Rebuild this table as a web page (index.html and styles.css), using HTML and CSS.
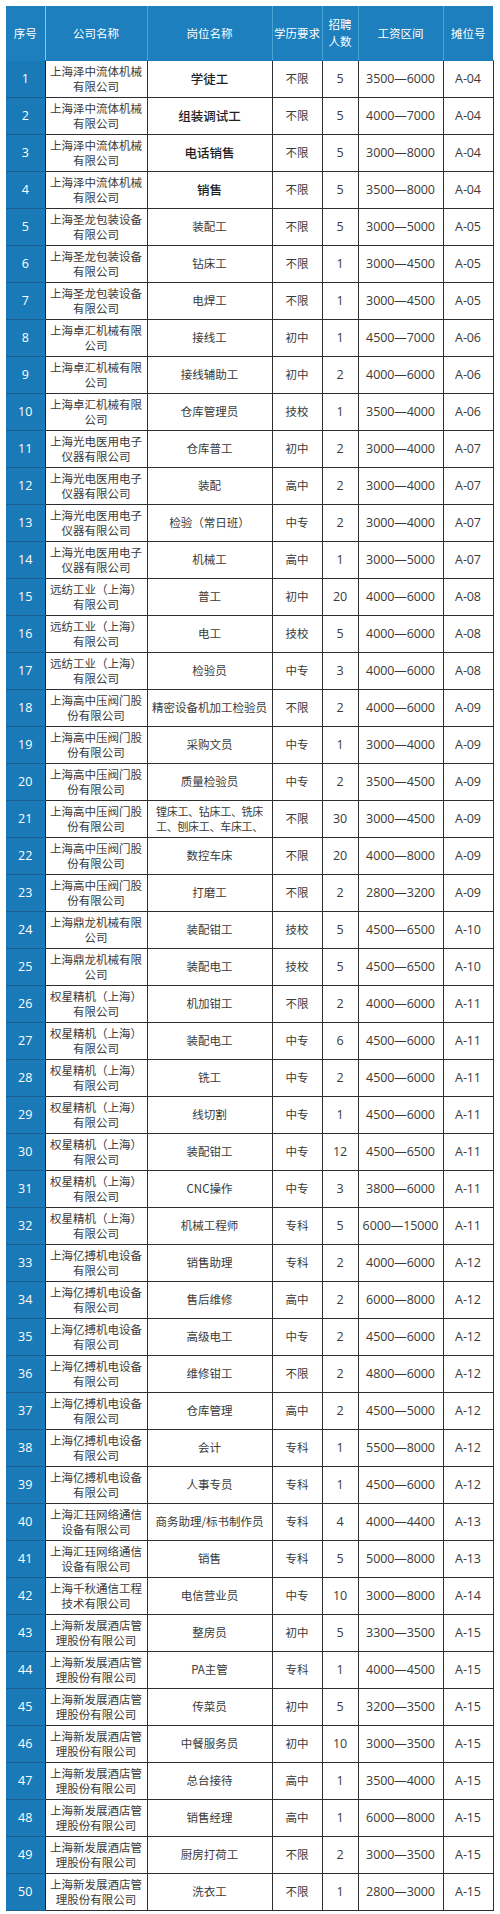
FILE: index.html
```html
<!DOCTYPE html>
<html lang="zh-CN">
<head>
<meta charset="utf-8">
<title>招聘岗位</title>
<link rel="stylesheet" href="styles.css">
</head>
<body>
<table class="sheet">
<colgroup>
<col class="c-no"><col class="c-co"><col class="c-job"><col class="c-edu"><col class="c-num"><col class="c-pay"><col class="c-booth">
</colgroup>
<thead>
<tr><th>序号</th><th>公司名称</th><th>岗位名称</th><th>学历要求</th><th>招聘<br>人数</th><th>工资区间</th><th>摊位号</th></tr>
</thead>
<tbody>
<tr><td class="no">1</td><td>上海泽中流体机械<br>有限公司</td><td class="em">学徒工</td><td>不限</td><td class="d">5</td><td class="d">3500—6000</td><td class="d">A-04</td></tr>
<tr><td class="no">2</td><td>上海泽中流体机械<br>有限公司</td><td class="em">组装调试工</td><td>不限</td><td class="d">5</td><td class="d">4000—7000</td><td class="d">A-04</td></tr>
<tr><td class="no">3</td><td>上海泽中流体机械<br>有限公司</td><td class="em">电话销售</td><td>不限</td><td class="d">5</td><td class="d">3000—8000</td><td class="d">A-04</td></tr>
<tr><td class="no">4</td><td>上海泽中流体机械<br>有限公司</td><td class="em">销售</td><td>不限</td><td class="d">5</td><td class="d">3500—8000</td><td class="d">A-04</td></tr>
<tr><td class="no">5</td><td>上海圣龙包装设备<br>有限公司</td><td>装配工</td><td>不限</td><td class="d">5</td><td class="d">3000—5000</td><td class="d">A-05</td></tr>
<tr><td class="no">6</td><td>上海圣龙包装设备<br>有限公司</td><td>钻床工</td><td>不限</td><td class="d">1</td><td class="d">3000—4500</td><td class="d">A-05</td></tr>
<tr><td class="no">7</td><td>上海圣龙包装设备<br>有限公司</td><td>电焊工</td><td>不限</td><td class="d">1</td><td class="d">3000—4500</td><td class="d">A-05</td></tr>
<tr><td class="no">8</td><td>上海卓汇机械有限<br>公司</td><td>接线工</td><td>初中</td><td class="d">1</td><td class="d">4500—7000</td><td class="d">A-06</td></tr>
<tr><td class="no">9</td><td>上海卓汇机械有限<br>公司</td><td>接线辅助工</td><td>初中</td><td class="d">2</td><td class="d">4000—6000</td><td class="d">A-06</td></tr>
<tr><td class="no">10</td><td>上海卓汇机械有限<br>公司</td><td>仓库管理员</td><td>技校</td><td class="d">1</td><td class="d">3500—4000</td><td class="d">A-06</td></tr>
<tr><td class="no">11</td><td>上海光电医用电子<br>仪器有限公司</td><td>仓库普工</td><td>初中</td><td class="d">2</td><td class="d">3000—4000</td><td class="d">A-07</td></tr>
<tr><td class="no">12</td><td>上海光电医用电子<br>仪器有限公司</td><td>装配</td><td>高中</td><td class="d">2</td><td class="d">3000—4000</td><td class="d">A-07</td></tr>
<tr><td class="no">13</td><td>上海光电医用电子<br>仪器有限公司</td><td>检验（常日班）</td><td>中专</td><td class="d">2</td><td class="d">3000—4000</td><td class="d">A-07</td></tr>
<tr><td class="no">14</td><td>上海光电医用电子<br>仪器有限公司</td><td>机械工</td><td>高中</td><td class="d">1</td><td class="d">3000—5000</td><td class="d">A-07</td></tr>
<tr><td class="no">15</td><td>远纺工业（上海）<br>有限公司</td><td>普工</td><td>初中</td><td class="d">20</td><td class="d">4000—6000</td><td class="d">A-08</td></tr>
<tr><td class="no">16</td><td>远纺工业（上海）<br>有限公司</td><td>电工</td><td>技校</td><td class="d">5</td><td class="d">4000—6000</td><td class="d">A-08</td></tr>
<tr><td class="no">17</td><td>远纺工业（上海）<br>有限公司</td><td>检验员</td><td>中专</td><td class="d">3</td><td class="d">4000—6000</td><td class="d">A-08</td></tr>
<tr><td class="no">18</td><td>上海高中压阀门股<br>份有限公司</td><td>精密设备机加工检验员</td><td>不限</td><td class="d">2</td><td class="d">4000—6000</td><td class="d">A-09</td></tr>
<tr><td class="no">19</td><td>上海高中压阀门股<br>份有限公司</td><td>采购文员</td><td>中专</td><td class="d">1</td><td class="d">3000—4000</td><td class="d">A-09</td></tr>
<tr><td class="no">20</td><td>上海高中压阀门股<br>份有限公司</td><td>质量检验员</td><td>中专</td><td class="d">2</td><td class="d">3500—4500</td><td class="d">A-09</td></tr>
<tr><td class="no">21</td><td>上海高中压阀门股<br>份有限公司</td><td class="tight">镗床工、钻床工、铣床<br>工、刨床工、车床工、</td><td>不限</td><td class="d">30</td><td class="d">3000—4500</td><td class="d">A-09</td></tr>
<tr><td class="no">22</td><td>上海高中压阀门股<br>份有限公司</td><td>数控车床</td><td>不限</td><td class="d">20</td><td class="d">4000—8000</td><td class="d">A-09</td></tr>
<tr><td class="no">23</td><td>上海高中压阀门股<br>份有限公司</td><td>打磨工</td><td>不限</td><td class="d">2</td><td class="d">2800—3200</td><td class="d">A-09</td></tr>
<tr><td class="no">24</td><td>上海鼎龙机械有限<br>公司</td><td>装配钳工</td><td>技校</td><td class="d">5</td><td class="d">4500—6500</td><td class="d">A-10</td></tr>
<tr><td class="no">25</td><td>上海鼎龙机械有限<br>公司</td><td>装配电工</td><td>技校</td><td class="d">5</td><td class="d">4500—6500</td><td class="d">A-10</td></tr>
<tr><td class="no">26</td><td>权星精机（上海）<br>有限公司</td><td>机加钳工</td><td>不限</td><td class="d">2</td><td class="d">4000—6000</td><td class="d">A-11</td></tr>
<tr><td class="no">27</td><td>权星精机（上海）<br>有限公司</td><td>装配电工</td><td>中专</td><td class="d">6</td><td class="d">4500—6000</td><td class="d">A-11</td></tr>
<tr><td class="no">28</td><td>权星精机（上海）<br>有限公司</td><td>铣工</td><td>中专</td><td class="d">2</td><td class="d">4500—6000</td><td class="d">A-11</td></tr>
<tr><td class="no">29</td><td>权星精机（上海）<br>有限公司</td><td>线切割</td><td>中专</td><td class="d">1</td><td class="d">4500—6000</td><td class="d">A-11</td></tr>
<tr><td class="no">30</td><td>权星精机（上海）<br>有限公司</td><td>装配钳工</td><td>中专</td><td class="d">12</td><td class="d">4500—6500</td><td class="d">A-11</td></tr>
<tr><td class="no">31</td><td>权星精机（上海）<br>有限公司</td><td>CNC操作</td><td>中专</td><td class="d">3</td><td class="d">3800—6000</td><td class="d">A-11</td></tr>
<tr><td class="no">32</td><td>权星精机（上海）<br>有限公司</td><td>机械工程师</td><td>专科</td><td class="d">5</td><td class="d">6000—15000</td><td class="d">A-11</td></tr>
<tr><td class="no">33</td><td>上海亿搏机电设备<br>有限公司</td><td>销售助理</td><td>专科</td><td class="d">2</td><td class="d">4000—6000</td><td class="d">A-12</td></tr>
<tr><td class="no">34</td><td>上海亿搏机电设备<br>有限公司</td><td>售后维修</td><td>高中</td><td class="d">2</td><td class="d">6000—8000</td><td class="d">A-12</td></tr>
<tr><td class="no">35</td><td>上海亿搏机电设备<br>有限公司</td><td>高级电工</td><td>中专</td><td class="d">2</td><td class="d">4500—6000</td><td class="d">A-12</td></tr>
<tr><td class="no">36</td><td>上海亿搏机电设备<br>有限公司</td><td>维修钳工</td><td>不限</td><td class="d">2</td><td class="d">4800—6000</td><td class="d">A-12</td></tr>
<tr><td class="no">37</td><td>上海亿搏机电设备<br>有限公司</td><td>仓库管理</td><td>高中</td><td class="d">2</td><td class="d">4500—5000</td><td class="d">A-12</td></tr>
<tr><td class="no">38</td><td>上海亿搏机电设备<br>有限公司</td><td>会计</td><td>专科</td><td class="d">1</td><td class="d">5500—8000</td><td class="d">A-12</td></tr>
<tr><td class="no">39</td><td>上海亿搏机电设备<br>有限公司</td><td>人事专员</td><td>专科</td><td class="d">1</td><td class="d">4500—6000</td><td class="d">A-12</td></tr>
<tr><td class="no">40</td><td>上海汇珏网络通信<br>设备有限公司</td><td>商务助理/标书制作员</td><td>专科</td><td class="d">4</td><td class="d">4000—4400</td><td class="d">A-13</td></tr>
<tr><td class="no">41</td><td>上海汇珏网络通信<br>设备有限公司</td><td>销售</td><td>专科</td><td class="d">5</td><td class="d">5000—8000</td><td class="d">A-13</td></tr>
<tr><td class="no">42</td><td>上海千秋通信工程<br>技术有限公司</td><td>电信营业员</td><td>中专</td><td class="d">10</td><td class="d">3000—8000</td><td class="d">A-14</td></tr>
<tr><td class="no">43</td><td>上海新发展酒店管<br>理股份有限公司</td><td>整房员</td><td>初中</td><td class="d">5</td><td class="d">3300—3500</td><td class="d">A-15</td></tr>
<tr><td class="no">44</td><td>上海新发展酒店管<br>理股份有限公司</td><td>PA主管</td><td>专科</td><td class="d">1</td><td class="d">4000—4500</td><td class="d">A-15</td></tr>
<tr><td class="no">45</td><td>上海新发展酒店管<br>理股份有限公司</td><td>传菜员</td><td>初中</td><td class="d">5</td><td class="d">3200—3500</td><td class="d">A-15</td></tr>
<tr><td class="no">46</td><td>上海新发展酒店管<br>理股份有限公司</td><td>中餐服务员</td><td>初中</td><td class="d">10</td><td class="d">3000—3500</td><td class="d">A-15</td></tr>
<tr><td class="no">47</td><td>上海新发展酒店管<br>理股份有限公司</td><td>总台接待</td><td>高中</td><td class="d">1</td><td class="d">3500—4000</td><td class="d">A-15</td></tr>
<tr><td class="no">48</td><td>上海新发展酒店管<br>理股份有限公司</td><td>销售经理</td><td>高中</td><td class="d">1</td><td class="d">6000—8000</td><td class="d">A-15</td></tr>
<tr><td class="no">49</td><td>上海新发展酒店管<br>理股份有限公司</td><td>厨房打荷工</td><td>不限</td><td class="d">2</td><td class="d">3000—3500</td><td class="d">A-15</td></tr>
<tr><td class="no">50</td><td>上海新发展酒店管<br>理股份有限公司</td><td>洗衣工</td><td>不限</td><td class="d">1</td><td class="d">2800—3000</td><td class="d">A-15</td></tr>
</tbody>
</table>
</body>
</html>
```

FILE: styles.css
```css
html, body {
  margin: 0;
  padding: 0;
  background: #ffffff;
}

body {
  font-family: "Open Sans", "Noto Sans CJK SC", sans-serif;
  color: #333333;
}

.sheet {
  margin: 6px 0 0 6px;
  width: 487px;
  table-layout: fixed;
  border-collapse: collapse;
}

.c-no { width: 39px; }
.c-co { width: 102px; }
.c-job { width: 125px; }
.c-edu { width: 50px; }
.c-num { width: 36px; }
.c-pay { width: 85px; }
.c-booth { width: 50px; }

.sheet th {
  height: 54px;
  padding: 0;
  background: #1d7fbe;
  color: #ffffff;
  font-weight: normal;
  font-size: 11.5px;
  line-height: 17px;
  text-align: center;
  vertical-align: middle;
  border-left: 1px solid #4aa3d6;
  border-bottom: 1px solid #1d7fbe;
  font-family: "Noto Sans CJK SC", sans-serif;
}

.sheet th:first-child {
  border-left: none;
  border-right: 1px solid #7cc8ee;
}

.sheet td {
  height: 36px;
  padding: 0 3px;
  border: 1px solid #2e2e2e;
  font-size: 11.5px;
  line-height: 15.5px;
  text-align: center;
  vertical-align: middle;
  color: #3a3a3a;
  font-family: "Noto Sans CJK SC", sans-serif;
  white-space: nowrap;
}

.sheet td:first-child {
  border-left: none;
}

.sheet td.no {
  background: #1a79b7;
  color: #ffffff;
  font-family: "Open Sans", sans-serif;
  font-size: 12.5px;
  border-top: 1px solid #1a5f8e;
  border-bottom: 1px solid #1a5f8e;
  border-right: 1px solid #1f1f1f;
}

.sheet td.d {
  font-family: "Open Sans", "Noto Sans CJK SC", sans-serif;
  font-size: 12.5px;
  letter-spacing: -0.1px;
}

.sheet td.em {
  font-size: 12.5px;
  color: #1e1e1e;
  font-weight: 500;
}

.sheet td.tight {
  padding: 0;
  font-size: 11px;
  line-height: 15px;
  letter-spacing: -0.3px;
}
```
